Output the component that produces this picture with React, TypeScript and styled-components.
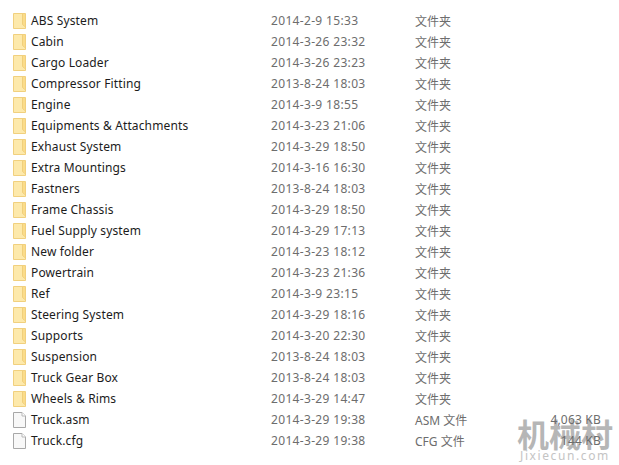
import * as React from 'react';
import styled, { createGlobalStyle } from 'styled-components';

const GlobalStyle = createGlobalStyle`
  html, body {
    margin: 0;
    background: #fff;
  }
`

const Page = styled.div`
  position: relative;
  width: 619px;
  height: 465px;
  overflow: hidden;
  padding-top: 10px;
  box-sizing: border-box;
  background: #fff;
  font-family: "Noto Sans", "Noto Sans CJK SC", sans-serif;
  font-size: 12px;
`

const Row = styled.div`
  display: grid;
  grid-template-columns: 18px 240px 144px 95px 91px;
  align-items: center;
  height: 21px;
  padding-left: 13px;
  white-space: nowrap;
`

const IconCell = styled.div`
  display: flex;
  align-items: center;
  height: 21px;
`

const Name = styled.div`
  color: #1c1c1c;
  letter-spacing: 0.13px;
`

const Muted = styled.div`
  color: #6d6d6d;
`

const DateText = styled(Muted)`
  letter-spacing: 0.33px;
`

const Size = styled(Muted)`
  position: relative;
  z-index: 1;
  text-align: right;
  letter-spacing: 0.2px;
`

const Watermark = styled.div`
  position: absolute;
  left: 517px;
  top: 415px;
  width: 100px;
  pointer-events: none;
`

const WatermarkTitle = styled.div`
  font: 700 32px/36px "Noto Sans CJK SC", sans-serif;
  color: rgba(110, 110, 110, 0.5);
`

const WatermarkUrl = styled.div`
  margin-left: 3px;
  font: 12px/10px "Noto Sans", sans-serif;
  letter-spacing: 1.6px;
  color: #c4c4c4;
`

const FolderIcon = () => (
  <svg width="13" height="16" viewBox="0 0 13 16">
    <path d="M.5.5h12v15H.5z" fill="#fbdc8a" stroke="#f1d07e" strokeWidth="1" />
    <path d="M1 1h8.500v10.500L12 13v2H1z" fill="#fde9ab" />
    <path d="M9.500 1v10.500L12.500 14" fill="none" stroke="#f0cf7b" strokeWidth="1" />
  </svg>
)

const FileIcon = () => (
  <svg width="13" height="16" viewBox="0 0 13 16">
    <path d="M.5.5h8.500l3.500 3.500v11.500H.5z" fill="#f8f8f8" stroke="#a8a8a8" strokeWidth="1" />
    <path d="M9 .5v3.500h3.500" fill="#fff" stroke="#b8b8b8" strokeWidth="1" />
  </svg>
)

type Entry = { name: string; date: string; type?: string; size?: string; file?: boolean }

const entries: Entry[] = [
  { name: 'ABS System', date: '2014-2-9 15:33' },
  { name: 'Cabin', date: '2014-3-26 23:32' },
  { name: 'Cargo Loader', date: '2014-3-26 23:23' },
  { name: 'Compressor Fitting', date: '2013-8-24 18:03' },
  { name: 'Engine', date: '2014-3-9 18:55' },
  { name: 'Equipments & Attachments', date: '2014-3-23 21:06' },
  { name: 'Exhaust System', date: '2014-3-29 18:50' },
  { name: 'Extra Mountings', date: '2014-3-16 16:30' },
  { name: 'Fastners', date: '2013-8-24 18:03' },
  { name: 'Frame Chassis', date: '2014-3-29 18:50' },
  { name: 'Fuel Supply system', date: '2014-3-29 17:13' },
  { name: 'New folder', date: '2014-3-23 18:12' },
  { name: 'Powertrain', date: '2014-3-23 21:36' },
  { name: 'Ref', date: '2014-3-9 23:15' },
  { name: 'Steering System', date: '2014-3-29 18:16' },
  { name: 'Supports', date: '2014-3-20 22:30' },
  { name: 'Suspension', date: '2013-8-24 18:03' },
  { name: 'Truck Gear Box', date: '2013-8-24 18:03' },
  { name: 'Wheels & Rims', date: '2014-3-29 14:47' },
  { name: 'Truck.asm', date: '2014-3-29 19:38', type: 'ASM 文件', size: '4,063 KB', file: true },
  { name: 'Truck.cfg', date: '2014-3-29 19:38', type: 'CFG 文件', size: '144 KB', file: true },
]

export default function App() {
  return (
    <Page>
      <GlobalStyle />
      {entries.map(e => (
        <Row key={e.name}>
          <IconCell>{e.file ? <FileIcon /> : <FolderIcon />}</IconCell>
          <Name>{e.name}</Name>
          <DateText>{e.date}</DateText>
          <Muted>{e.type ?? '文件夹'}</Muted>
          <Size>{e.size}</Size>
        </Row>
      ))}
      <Watermark>
        <WatermarkTitle>机械村</WatermarkTitle>
        <WatermarkUrl>Jixiecun.com</WatermarkUrl>
      </Watermark>
    </Page>
  )
}
